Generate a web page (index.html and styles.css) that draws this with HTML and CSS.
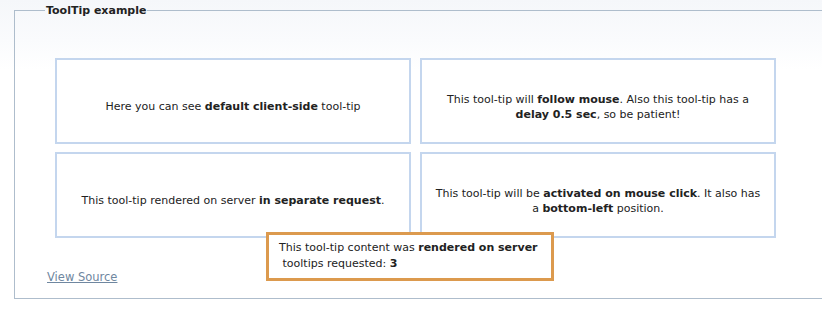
FILE: index.html
```html
<!DOCTYPE html>
<html lang="en">
<head>
  <meta charset="UTF-8" />
  <title>ToolTip example</title>
  <link rel="stylesheet" href="styles.css">
</head>
<body>

  <fieldset class="demo">
    <legend>ToolTip example</legend>

    <div class="grid">
      <div class="cell">
        <p>Here you can see <b>default client-side</b> tool-tip</p>
      </div>
      <div class="cell">
        <p>This tool-tip will <b>follow mouse</b>. Also this tool-tip has a <b>delay 0.5 sec</b>, so be patient!</p>
      </div>
      <div class="cell">
        <p>This tool-tip rendered on server <b>in separate request</b>.</p>
      </div>
      <div class="cell">
        <p>This tool-tip will be <b>activated on mouse click</b>. It also has a&nbsp;<b>bottom-left</b> position.</p>
      </div>
    </div>

    <a class="source" href="#">View Source</a>

    <!-- server tooltip, shown under the 3rd cell -->
    <div class="tooltip">
      This tool-tip content was <b>rendered on server</b><br>
      &nbsp;tooltips requested: <b>3</b>
    </div>
  </fieldset>

</body>
</html>
```

FILE: styles.css
```css
body {
  margin: 0;
  font-family: "DejaVu Sans", Verdana, sans-serif;
  font-size: 11px;
  color: #222;
  background: linear-gradient(#f5f7fa, #fafbfd 40px, #fff 70px) no-repeat;
  min-height: 313px;
}
.demo {
  position: relative;
  margin: 4px 0 0 14px;
  padding: 41px 0 14px 40px;
  border: 1px solid #aebdcc;
  border-right: 0;
}
.demo legend {
  font-weight: bold;
  padding: 0 1px;
  margin-left: -10px;
}
.grid {
  display: grid;
  grid-template-columns: 356px 356px;
  grid-auto-rows: 86px;
  gap: 8px 9px;
}
.cell {
  background: #fff;
  border: 2px solid #c4d6ee;
  display: flex;
  align-items: center;
  justify-content: center;
  text-align: center;
  padding: 11px 10px 0;
}
.cell p {
  margin: 0;
  line-height: 15px;
}
.source {
  display: inline-block;
  margin: 32px 0 0 -8px;
  font-size: 11.5px;
  color: #6f87a0;
}
.tooltip {
  position: absolute;
  left: 251px;
  top: 215px;
  background: #fff;
  border: 3px solid #dc9a4e;
  padding: 5px 13px 6px 10px;
  line-height: 16px;
}
```
